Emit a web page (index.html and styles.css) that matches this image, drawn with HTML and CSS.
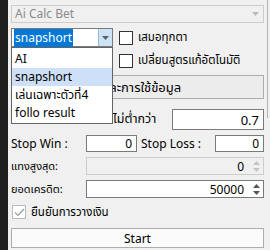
FILE: index.html
```html
<!DOCTYPE html>
<html lang="th">
<head>
  <meta charset="UTF-8" />
  <meta name="viewport" content="width=device-width, initial-scale=1.0"/>
  <title>Ai Calc Bet</title>
  <link rel="stylesheet" href="styles.css">
</head>
<body>

<div class="app">
  <div class="edge"></div>

  <div class="panel">
    <div class="combo disabled">
      <span class="combo-text">Ai Calc Bet</span>
      <span class="combo-arrow"><svg width="7" height="4" viewBox="0 0 7 4"><path d="M0 0h7L3.5 4z" fill="#b9b9b9"/></svg></span>
    </div>

    <div class="row-mode">
      <div class="combo open">
        <span class="combo-text"><span class="sel">snapshort</span></span>
        <span class="combo-btn"><svg width="7" height="4" viewBox="0 0 7 4"><path d="M0 0h7L3.5 4z" fill="#606060"/></svg></span>
      </div>
      <div class="checks">
        <label class="check"><span class="box"></span>เสมอทุกตา</label>
        <label class="check"><span class="box"></span>เปลี่ยนสูตรแก้อัตโนมัติ</label>
      </div>
    </div>

    <div class="terms">และการใช้ข้อมูล</div>

    <div class="row-min">
      <span class="label min-label">ไม่ต่ำกว่า</span>
      <div class="field w-min">0.7</div>
    </div>

    <div class="row-stop">
      <span class="label lw">Stop Win :</span>
      <div class="field w-win">0</div>
      <span class="label lw2">Stop Loss :</span>
      <div class="field w-loss">0</div>
    </div>

    <div class="row-spin">
      <span class="label lw th">แทงสูงสุด:</span>
      <div class="spin disabled">
        <span class="spin-val">0</span>
        <span class="spin-arrows">
          <svg width="7" height="4" viewBox="0 0 7 4"><path d="M0 4h7L3.5 0z" fill="#c4c4c4"/></svg>
          <svg width="7" height="4" viewBox="0 0 7 4"><path d="M0 0h7L3.5 4z" fill="#c4c4c4"/></svg>
        </span>
      </div>
    </div>

    <div class="row-spin">
      <span class="label lw th">ยอดเครดิต:</span>
      <div class="spin">
        <span class="spin-val">50000</span>
        <span class="spin-arrows">
          <svg width="7" height="4" viewBox="0 0 7 4"><path d="M0 4h7L3.5 0z" fill="#555"/></svg>
          <svg width="7" height="4" viewBox="0 0 7 4"><path d="M0 0h7L3.5 4z" fill="#555"/></svg>
        </span>
      </div>
    </div>

    <label class="check confirm">
      <span class="box checked"><svg width="11" height="9" viewBox="0 0 11 9"><path d="M1 4.5l3 3 6-6.5" fill="none" stroke="#9a9a9a" stroke-width="1.2"/></svg></span>
      ยืนยันการวางเงิน
    </label>

    <button class="start">Start</button>

    <ul class="dropdown">
      <li>AI</li>
      <li class="hover">snapshort</li>
      <li>เล่นเฉพาะตัวที่4</li>
      <li>follo result</li>
    </ul>
  </div>
</div>

</body>
</html>
```

FILE: styles.css
```css
* {
  box-sizing: border-box;
}
body {
  margin: 0;
  font-family: 'Segoe UI', 'Noto Sans', 'Noto Sans Thai', Tahoma, sans-serif;
  font-size: 12px;
  color: #000;
  background: #f0f0f0;
}

.app {
  display: flex;
  width: 270px;
  height: 250px;
  overflow: hidden;
}
.edge {
  width: 8px;
  background: #1e1e1e;
}
.panel {
  position: relative;
  flex: 1;
  background: #f0f0f0;
  padding: 5px 6px 0 3px;
  display: flex;
  flex-direction: column;
}
.panel::after {
  content: "";
  position: absolute;
  right: 2px;
  top: 0;
  width: 1px;
  height: 118px;
  background: #b4b4b4;
}

/* combo boxes */
.combo {
  display: flex;
  align-items: center;
  height: 18px;
  border: 1px solid #acacac;
  background: #fff;
}
.combo.disabled {
  background: #f0f0f0;
  border-color: #cccccc;
  color: #8a8a8a;
}
.combo-text {
  flex: 1;
  padding-left: 3px;
  line-height: 16px;
}
.combo-arrow {
  width: 16px;
  display: flex;
  justify-content: center;
}
.combo.open {
  width: 102px;
  height: 19px;
  border-color: #7a7a7a;
}
.combo.open .combo-text {
  padding-left: 2px;
}
.sel {
  background: #0078d7;
  color: #fff;
  padding: 0 1px 1px 1px;
}
.combo-btn {
  width: 14px;
  height: 100%;
  background: #cce4f7;
  border-left: 1px solid #98b8d6;
  display: flex;
  align-items: center;
  justify-content: center;
}

.row-mode {
  display: flex;
  gap: 6px;
  margin-top: 5px;
  height: 46px;
}
.checks {
  display: flex;
  flex-direction: column;
  gap: 8px;
  padding-top: 2px;
  font-size: 11.5px;
}
.check {
  display: flex;
  align-items: center;
  gap: 5px;
  height: 15px;
  white-space: nowrap;
}
.box {
  width: 14px;
  height: 14px;
  border: 1px solid #333;
  background: #fff;
  display: flex;
  align-items: center;
  justify-content: center;
}
.box.checked {
  border-color: #bcbcbc;
}

.terms {
  margin-top: 1px;
  height: 24px;
  border: 1px solid #adadad;
  background: #ececec;
  font-size: 13px;
  line-height: 22px;
  padding-left: 90px;
}

.row-min {
  display: flex;
  align-items: center;
  margin-top: 10px;
  height: 21px;
  padding-left: 102px;
}
.min-label {
  width: 59px;
  font-size: 12.5px;
}
.field {
  height: 100%;
  border: 1px solid #7a7a7a;
  background: #fff;
  padding-right: 4px;
  display: flex;
  align-items: center;
  justify-content: flex-end;
}
.w-min { width: 92px; font-size: 13px; }
.w-win { width: 51px; }
.w-loss { width: 49px; }

.row-stop {
  display: flex;
  align-items: center;
  margin-top: 5px;
  height: 17px;
}
.label {
  white-space: nowrap;
}
.lw { width: 75px; }
.lw2 { width: 78px; padding-left: 4px; }
.th { font-size: 11px; }

.row-spin {
  display: flex;
  align-items: center;
  margin-top: 5px;
  height: 18px;
}
.spin {
  flex: 1;
  height: 100%;
  display: flex;
  align-items: center;
  border: 1px solid #7a7a7a;
  background: #fff;
}
.spin.disabled {
  background: #f0f0f0;
  border-color: #cccccc;
}
.spin-val {
  flex: 1;
  text-align: right;
  padding-right: 6px;
}
.spin-arrows {
  width: 13px;
  display: flex;
  flex-direction: column;
  align-items: center;
  gap: 3px;
}

.confirm {
  margin-top: 6px;
  height: 16px;
  padding-left: 1px;
  font-size: 11.5px;
}

.start {
  margin-top: 8px;
  height: 20px;
  border: 1px solid #adadad;
  background: #fbfbfb;
  font-family: inherit;
  font-size: 12px;
  padding: 0;
}

.dropdown {
  position: absolute;
  left: 3px;
  top: 47px;
  width: 102px;
  margin: 0;
  padding: 2px 0 1px;
  list-style: none;
  border: 1px solid #646464;
  background: #fff;
  z-index: 2;
}
.dropdown li {
  height: 18px;
  line-height: 18px;
  padding-left: 3px;
  white-space: nowrap;
}
.dropdown li.hover {
  background: #cde0f7;
}
```
